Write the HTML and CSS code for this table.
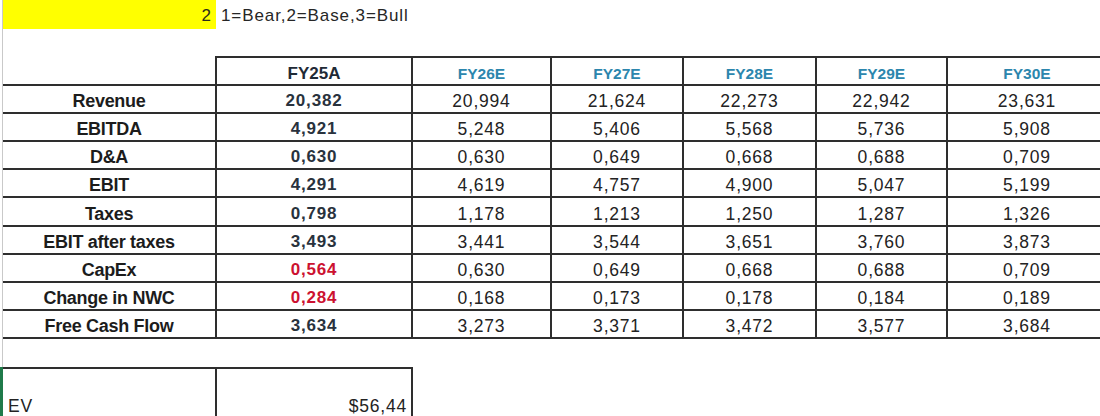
FILE: index.html
```html
<!DOCTYPE html>
<html lang="en">
<head>
<meta charset="utf-8">
<title>DCF model</title>
<link rel="stylesheet" href="styles.css">
</head>
<body>
<div class="sheet">
  <div class="input-row">
    <div class="input-cell">2</div>
    <div class="note">1=Bear,2=Base,3=Bull</div>
  </div>

  <table class="model">
    <colgroup>
      <col class="c-label"><col class="c-actual"><col class="c-26"><col class="c-27"><col class="c-28"><col class="c-29"><col class="c-30">
    </colgroup>
    <thead>
      <tr>
        <th class="blank"></th>
        <th class="yr actual">FY25A</th>
        <th class="yr">FY26E</th>
        <th class="yr">FY27E</th>
        <th class="yr">FY28E</th>
        <th class="yr">FY29E</th>
        <th class="yr">FY30E</th>
      </tr>
    </thead>
    <tbody>
      <tr><th>Revenue</th><td class="actual">20,382</td><td>20,994</td><td>21,624</td><td>22,273</td><td>22,942</td><td>23,631</td></tr>
      <tr><th>EBITDA</th><td class="actual">4,921</td><td>5,248</td><td>5,406</td><td>5,568</td><td>5,736</td><td>5,908</td></tr>
      <tr><th>D&amp;A</th><td class="actual">0,630</td><td>0,630</td><td>0,649</td><td>0,668</td><td>0,688</td><td>0,709</td></tr>
      <tr><th>EBIT</th><td class="actual">4,291</td><td>4,619</td><td>4,757</td><td>4,900</td><td>5,047</td><td>5,199</td></tr>
      <tr><th>Taxes</th><td class="actual">0,798</td><td>1,178</td><td>1,213</td><td>1,250</td><td>1,287</td><td>1,326</td></tr>
      <tr><th>EBIT after taxes</th><td class="actual">3,493</td><td>3,441</td><td>3,544</td><td>3,651</td><td>3,760</td><td>3,873</td></tr>
      <tr><th>CapEx</th><td class="actual neg">0,564</td><td>0,630</td><td>0,649</td><td>0,668</td><td>0,688</td><td>0,709</td></tr>
      <tr><th>Change in NWC</th><td class="actual neg">0,284</td><td>0,168</td><td>0,173</td><td>0,178</td><td>0,184</td><td>0,189</td></tr>
      <tr><th>Free Cash Flow</th><td class="actual">3,634</td><td>3,273</td><td>3,371</td><td>3,472</td><td>3,577</td><td>3,684</td></tr>
    </tbody>
  </table>

  <table class="ev">
    <colgroup><col class="c-label"><col class="c-actual"></colgroup>
    <tr><th>EV</th><td>$56,44</td></tr>
  </table>
</div>
</body>
</html>
```

FILE: styles.css
```css
html, body {
  margin: 0;
  padding: 0;
  background: #ffffff;
  overflow: hidden;
}

body {
  font-family: "Liberation Sans", Arial, sans-serif;
  color: #222222;
  width: 1100px;
  height: 416px;
}

.sheet {
  margin-left: 2px;
  border-left: 1px solid #c9c9c9;
  height: 416px;
  width: 1200px;
}

.input-row {
  display: flex;
  height: 29px;
  align-items: stretch;
}

.input-cell {
  width: 213px;
  box-sizing: border-box;
  background: #ffff00;
  text-align: right;
  padding: 2px 5px 0 0;
  font-size: 17px;
  line-height: 27px;
  color: #2a2a1a;
}

.note {
  padding: 2px 0 0 5px;
  font-size: 17px;
  letter-spacing: 0.9px;
  line-height: 27px;
  color: #262626;
}

table {
  border-collapse: collapse;
  table-layout: fixed;
}

.model {
  margin-top: 27px;
  width: 1104px;
}

.c-label { width: 213px; }
.c-actual { width: 196px; }
.c-26 { width: 139px; }
.c-27 { width: 132px; }
.c-28 { width: 133px; }
.c-29 { width: 131px; }
.c-30 { width: 160px; }

.model th,
.model td {
  height: 28.1px;
  padding: 4px 0 0 0;
  box-sizing: border-box;
  text-align: center;
  vertical-align: middle;
  white-space: nowrap;
  line-height: 20px;
}

.model td,
.model th.yr {
  border: 2px solid #2e2e2e;
}

.model tbody th {
  border-top: 2px solid #2e2e2e;
  border-bottom: 2px solid #2e2e2e;
  font-weight: bold;
  font-size: 18px;
  letter-spacing: -0.3px;
  color: #1c1c1c;
}

.model th.blank {
  border: none;
}

.model th.yr {
  font-size: 15.5px;
  font-weight: bold;
  color: #2c86ad;
  padding-top: 5px;
}

.model th.yr.actual {
  font-size: 17px;
  color: #1f2a36;
}

.model td {
  font-size: 17.5px;
  letter-spacing: 0.8px;
  color: #232323;
}

.model td.actual {
  font-weight: bold;
  font-size: 17px;
  letter-spacing: 0.8px;
  color: #29323d;
}

.model td.neg {
  color: #cc1130;
}

.ev {
  position: relative;
  margin-top: 28px;
  width: 409px;
}

.ev::before {
  content: "";
  position: absolute;
  left: -3px;
  top: 0;
  bottom: 0;
  width: 3px;
  background: #1f7a4a;
}

.ev th,
.ev td {
  height: 50px;
  padding: 0 0 2px 0;
  box-sizing: border-box;
  vertical-align: bottom;
  font-size: 17.5px;
  letter-spacing: 0.8px;
  line-height: 20px;
  font-weight: normal;
  color: #232323;
  border-top: 2px solid #2e2e2e;
}

.ev th {
  text-align: left;
  padding-left: 5px;
}

.ev td {
  text-align: right;
  padding-right: 4px;
  border-left: 2px solid #2e2e2e;
  border-right: 2px solid #2e2e2e;
}
```
